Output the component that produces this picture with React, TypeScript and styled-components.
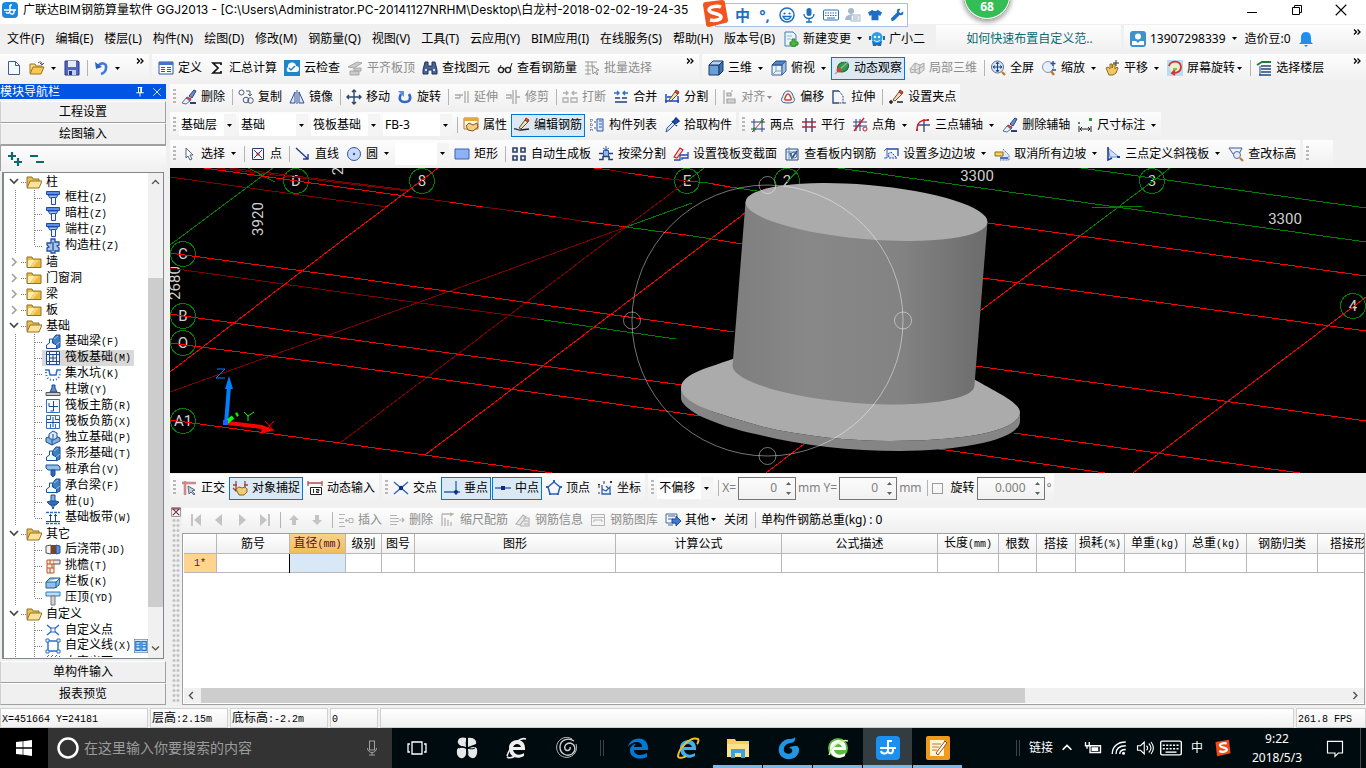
import React, { ReactNode } from 'react';
import styled, { createGlobalStyle, css } from 'styled-components';

const UI_FONT = '"Noto Sans", "Noto Sans CJK SC", sans-serif';

const Global = createGlobalStyle`
  *, *::before, *::after { box-sizing: border-box; }
  body { margin: 0; background: #f0f0f0; font: 12px/16px ${UI_FONT}; color: #000; }
  button, input, select { font: inherit; color: inherit; margin: 0; padding: 0; border: 0; background: none; border-radius: 0; }
  svg { display: block; flex: none; }
`;

/* ---------- icons ---------- */

const N = '#24407e';
const B = '#2f6fc4';
const R = '#c8202c';
const K = '#222';

const pencil = (
  <>
    <path d="M5 11l6-8 3 2-7 7z" fill="#f4e2b0" stroke="#5b4a3a" />
    <path d="M11 3l1-2 3 2-1 2z" fill="#d9503c" stroke="#a03020" />
  </>
);
const brush = (
  <>
    <path d="M8 7l5-6 2 1-4 7z" fill="#6d8fd0" stroke="#27407c" />
    <path d="M6 8l4 2-1 2-4-2z" fill="#e05040" stroke="#a02a20" />
    <path d="M5 9l4 3-4 3-4-1z" fill="#e8eefb" stroke="#55719f" />
    <path d="M9 14h6" stroke="#27407c" strokeWidth="2" />
  </>
);
const column = (
  <>
    <path d="M1.5 1.5h13v3h-13z" fill="#5f90e4" stroke="#1b4aa8" />
    <path d="M3 5h10l-2 3H5z" fill="#a9c6f2" stroke="#1b4aa8" />
    <path d="M6.500 7.500h4v7h-4z" fill="#f0f6ff" stroke="#1b4aa8" />
  </>
);
const beam = (
  <>
    <path d="M7 6l4-5h4v12l-4 2z" fill="#3f7fc4" stroke="#1d4f90" />
    <path d="M1.500 14.500V11l3-2V5h3v4l4 2v3.500z" fill="#f2f8ff" stroke="#1d4f90" />
    <path d="M9 5l4-3M11 11l4-3" stroke="#8fbce8" />
  </>
);
const grid3 = <path d="M4 2v12M8 2v12M1 5h14M1 9h14" stroke={N} />;

const icons: Record<string, ReactNode> = {
  app: (
    <>
      <rect width="16" height="16" rx="4" fill="#1d87e0" />
      <path d="M8 3v6c0 2-3 3-4 1M2 8h12M12 8v2c0 2-2 3-4 1M8 3h2" stroke="#fff" strokeWidth="1.5" />
    </>
  ),
  newFile: <path d="M2.500 1.500h7l4 4v9h-11zM9.500 1.500v4h4" fill="#f4f8ff" stroke="#3f5e8c" />,
  open: (
    <>
      <path d="M1 13V4h5l1 2h6v2" fill="#f6d98a" stroke="#9b7420" />
      <path d="M1 14l3-7h11l-3 7z" fill="#f8c94e" stroke="#9b7420" />
      <path d="M9 3c2-2 4-1 4 1m-2-1l2 2 2-2" stroke="#456" />
    </>
  ),
  save: (
    <>
      <path d="M1 1h13l1 1v13H1z" fill="#5166c4" stroke="#28367e" />
      <path d="M4 1h8v6H4z" fill="#e6ecfb" />
      <path d="M4 10h8v5H4z" fill="#c4cdec" />
      <path d="M5 11h3v4H5z" fill="#28367e" />
    </>
  ),
  undo: (
    <>
      <path d="M5 6c4-5 9-2 8 2 0 3-2 5-5 6" stroke="#3f7ad8" strokeWidth="2.600" />
      <path d="M2 2l1 7 6-2z" fill="#2c5fc0" />
    </>
  ),
  define: (
    <>
      <path d="M1 2h14v12H1z" fill="#fff" stroke="#2858a8" />
      <path d="M1 2h14v3H1z" fill="#3f74c8" />
      <path d="M3 7.500h4M3 9.500h4M3 11.500h4M9 7.500h4M9 9.500h4M9 11.500h4" stroke="#2858a8" />
    </>
  ),
  sigma: <path d="M12 5V3H4l5 5-5 5h8v-2" stroke="#111" strokeWidth="1.7" />,
  cloud: (
    <>
      <rect width="16" height="16" fill="#1f86cc" />
      <path d="M4 12a3 3 0 0 1 0-5 4 4 0 0 1 8-1 3 3 0 0 1 0 6z" fill="#fff" />
      <path d="M5 8l2 2 4-4" stroke="#1f86cc" strokeWidth="1.5" />
    </>
  ),
  slabTop: <path d="M1 7l9-5 5 1-8 5zM7 8h7v3H7zM3 11h9v4H3z" fill="#c9c9c9" stroke="#a8a8a8" />,
  find: (
    <>
      <path d="M3 2h3v4h4V2h3l2 8v4h-5v-4H6v4H1v-4z" fill="#4a6494" stroke="#1d3260" />
      <path d="M3 10h2M11 10h2" stroke="#cfe0ff" strokeWidth="2" />
    </>
  ),
  glasses: (
    <>
      <circle cx="4" cy="10" r="2.6" stroke={K} strokeWidth="1.4" />
      <circle cx="11" cy="10" r="2.6" stroke={K} strokeWidth="1.4" />
      <path d="M6 9h2M2 9l2-4M13 9l2-6" stroke={K} />
    </>
  ),
  batch: (
    <>
      <path d="M1 2h12M1 6h10M1 10h6M1 14h6M4 1v14M8 1v5" stroke="#a0a0a0" />
      <path d="M8 6l1 8 2-2 2 3 1-1-2-3 3-1z" fill="#eee" stroke="#999" />
    </>
  ),
  cube: (
    <>
      <path d="M1 5h10v10H1z" fill="#6c9fd4" stroke="#163a6c" />
      <path d="M1 5l4-4h10l-4 4z" fill="#b7d3f0" stroke="#163a6c" />
      <path d="M11 5l4-4v10l-4 4z" fill="#3f72ac" stroke="#163a6c" />
    </>
  ),
  topView: (
    <>
      <path d="M1 5h10v10H1z" fill="#e9f1fb" stroke="#3a5f94" />
      <path d="M1 5l4-4h10l-4 4z" fill="#4a86cc" stroke="#24487c" />
      <path d="M11 5l4-4v10l-4 4z" fill="#9fc0e8" stroke="#3a5f94" />
      <path d="M5 6v5h6M1 15l4-4" stroke="#7da0cc" />
    </>
  ),
  orbit: (
    <>
      <ellipse cx="9" cy="7" rx="6" ry="4.6" transform="rotate(-35 9 7)" fill="#2f9c48" stroke="#166a2c" />
      <path d="M1 14L14 2" stroke="#9aa" strokeWidth="1.5" />
      <circle cx="5" cy="10" r="2.5" fill="#d8423c" />
      <path d="M4 4c2-3 5-3 7-2" stroke="#bff0c4" />
    </>
  ),
  local3d: <path d="M1 9l5-6 5 2 4-2v7l-5 4-4-2-4 1zM6 3v9M11 5l-1 9M2 9l4 1 9-4" fill="#e0e0e0" stroke="#a8a8a8" />,
  full: (
    <>
      <circle cx="7.5" cy="7" r="6" fill="#d8e8fb" stroke="#5c7090" />
      <path d="M7.5 2.5v9M3 7h9M6 4l1.500-2L9 4M6 10l1.500 2L9 10M5 5.500L3 7l2 1.500M10 5.500L12 7l-2 1.500" stroke="#1c3f86" />
      <path d="M12 12l3 3" stroke="#c07a2c" strokeWidth="2.4" />
    </>
  ),
  zoom: (
    <>
      <circle cx="7" cy="7" r="5.500" fill="#e6f0fb" stroke="#8595ac" />
      <path d="M12 1v5M9.500 3.500h5M11 10h4" stroke="#2b4f9a" strokeWidth="1.400" />
      <path d="M10 11l3 4" stroke="#c07a2c" strokeWidth="2.400" />
    </>
  ),
  pan: (
    <>
      <path d="M2 8l2-1 2 2V4h2v4l1-4h2v5l2-2 1 1-2 5-3 2H5z" fill="#f0c860" stroke="#8c6a28" />
      <path d="M12 0v6M9 3h6" stroke="#333" />
    </>
  ),
  rotateScr: (
    <>
      <rect width="16" height="16" fill="#b7dff2" />
      <circle cx="8" cy="8" r="5" fill="#e9f2c8" />
      <path d="M2 6c1-6 12-6 12 1 0 4-3 6-8 6M8 10l-3 3 3 2" stroke="#d83030" strokeWidth="1.800" />
      <path d="M6 8h4v2H6z" fill="#8cb860" />
    </>
  ),
  floors: (
    <>
      <path d="M1 5l5-3h9" stroke="#1f7a3a" strokeWidth="1.800" />
      <path d="M5 6h10M5 9h10M5 12h10M3 15h12" stroke="#23477f" strokeWidth="1.500" />
      <path d="M4 6v9" stroke="#23477f" />
    </>
  ),
  brush,
  copy: (
    <>
      <circle cx="3.500" cy="3.500" r="2.500" stroke="#4c5c78" />
      <circle cx="8" cy="11" r="2.800" stroke="#4c5c78" />
      <circle cx="12.500" cy="11.500" r="2.800" stroke="#4c5c78" />
      <path d="M8 2h4v4M10 5l2 2 2-2" stroke="#4c5c78" />
    </>
  ),
  mirror: (
    <>
      <path d="M1 14L6 3v11zM15 14L10 3v11z" fill="#dce8fb" stroke="#2d4f94" />
      <path d="M8 1v14" stroke="#2d4f94" />
    </>
  ),
  move: <path d="M8 1v14M1 8h14M6 3l2-2 2 2M6 13l2 2 2-2M3 6L1 8l2 2M13 6l2 2-2 2" stroke="#2d4870" strokeWidth="1.400" />,
  rotate: (
    <>
      <path d="M4 5c-3 6 0 8 4 8s7-3 4-8" stroke="#2f66c8" strokeWidth="2.600" />
      <path d="M1 2h6v6z" fill="#5f8fe0" />
    </>
  ),
  extend: <path d="M1 6h8M1 9h5M6 6v3M11 2v12M14 2v12" stroke="#aaa" strokeWidth="1.300" />,
  trim: <path d="M1 6h5v4M8 1v14M11 1v14M11 8h4M1 9h4" stroke="#aaa" strokeWidth="1.300" />,
  breakIt: <path d="M1 4h5M4 2l2 2-2 2M10 4h5M12 2l-2 2 2 2M1 9h5v4H1zM9 9h6v4H9z" stroke="#b0b0b0" strokeWidth="1.300" />,
  merge: (
    <>
      <path d="M1 4h5M4 2l2 2-2 2M10 4h5M12 2l-2 2 2 2" stroke={B} strokeWidth="1.400" />
      <path d="M2 9h5M9 9h5M2 13h12" stroke={N} strokeWidth="1.600" />
    </>
  ),
  split: (
    <>
      <path d="M2 5v9M14 7v7M1 12h14M3 8h8" stroke="#1c3fd0" strokeWidth="1.400" />
      {pencil}
    </>
  ),
  align: <path d="M3 1v14M6 4h4v3H6zM6 10h8v4H6zM12 2l-2 0" fill="#d0d0d0" stroke="#a4a4a4" strokeWidth="1.200" />,
  offset: (
    <>
      <path d="M8 2c4 0 4 3 6 7 2 4-2 5-6 5s-8-1-6-5c2-4 2-7 6-7z" fill="#e8eef8" stroke="#3b5f94" />
      <path d="M8 5c2 0 2 2 3 4s-1 2-3 2-4 0-3-2 1-4 3-4z" fill="#fff" stroke="#d8402c" strokeWidth="1.500" />
    </>
  ),
  stretch: (
    <>
      <path d="M8 2H2v12h6" stroke="#2c4c80" strokeWidth="1.400" />
      <path d="M8 2l4 5v7H8" stroke="#2c4c80" strokeDasharray="2 1" />
      <path d="M12 14h3" stroke="#2c4c80" />
    </>
  ),
  grip: (
    <>
      {pencil}
      <path d="M1 13h4M9 13h6M3 11v4" stroke={K} strokeWidth="1.500" />
    </>
  ),
  props: (
    <>
      <path d="M1 1h14v11H1z" fill="#fff7e4" stroke="#b07a28" />
      <path d="M1 1h14v3H1z" fill="#e8a53c" />
      <path d="M3 9l3-3 4 2 4-2 1 4-5 4-5-1z" fill="#f4cf80" stroke="#7a5a20" />
    </>
  ),
  editBar: (
    <>
      {pencil}
      <path d="M0 12c3-1 4 2 7 1l8-1" stroke={K} strokeWidth="1.300" />
    </>
  ),
  compList: (
    <>
      <path d="M2 2v12M1 3h3M1 8h3M1 13h3" stroke="#2c4f8c" strokeDasharray="1 1" />
      <path d="M8 2h6v12H8z" fill="#dce8fb" stroke="#2858a8" />
      <path d="M10 4h3M10 7h3M10 10h3" stroke="#2858a8" />
      <path d="M5 5h2M5 11h2" stroke="#555" />
    </>
  ),
  picker: (
    <>
      <path d="M2 15l1-4 6-6 2 2-6 6z" fill="#d6e6fa" stroke="#385a94" />
      <path d="M8 4l5 5M9 5l3-4 3 3-4 3z" fill="#1c58c0" stroke="#153a80" strokeWidth="1.500" />
    </>
  ),
  twoPt: (
    <>
      <path d="M4 2v13M12 1v14M1 5h14M1 12h14" stroke={N} />
      <path d="M2 15L14 2" stroke={R} />
      <circle cx="12" cy="4.500" r="1.500" fill="#2c8a30" />
      <circle cx="4.500" cy="12" r="1.500" fill="#2c8a30" />
    </>
  ),
  parallel: (
    <>
      <path d="M1 5h14M1 10h14" stroke={R} strokeWidth="1.500" />
      <path d="M5 1v14M11 1v14" stroke="#404a80" strokeWidth="1.500" />
    </>
  ),
  ptAngle: (
    <>
      {grid3}
      <path d="M2 14L12 1" stroke={R} strokeWidth="1.400" />
      <circle cx="13" cy="12" r="2" stroke={R} />
    </>
  ),
  threePt: (
    <>
      <path d="M9 2v13M2 8h13" stroke="#404a80" strokeWidth="1.400" />
      <path d="M2 13c0-8 4-10 11-10" stroke={R} strokeWidth="1.500" />
      <path d="M1 12h2v2H1zM12 2h2v2h-2z" fill={R} />
    </>
  ),
  dim: (
    <>
      <path d="M2 9v6M14 9v6M3 12h10M5 10l-2 2 2 2M11 10l2 2-2 2" stroke={K} />
      <path d="M1 5h2v2H1zM12 1h3v3h-3z" fill="#2f9c3c" />
    </>
  ),
  cursor: <path d="M5 2v10l2-2 2 4 2-1-2-4h3z" fill="#fff" stroke="#53647e" />,
  point: (
    <>
      <path d="M2.500 2.500h11v11h-11z" stroke="#283a6c" fill="#f5f8ff" />
      <path d="M4 4l8 8M12 4l-8 8" stroke="#283a6c" />
      <circle cx="8" cy="8" r="1.600" fill={R} />
    </>
  ),
  line: <path d="M1 2l12 11M13 8v5H8" stroke="#22407c" strokeWidth="1.400" />,
  circle: (
    <>
      <circle cx="8" cy="8" r="6.500" fill="#c9dafc" stroke="#3254b0" />
      <circle cx="8" cy="8" r="1.200" fill="#3254b0" />
    </>
  ),
  rect: <path d="M1 3h14v10H1z" fill="#8fb2f4" stroke="#3a62b8" />,
  autoSlab: <path d="M2 2h4v4H2zM10 2h4v4h-4zM2 10h4v4H2zM10 10h4v4h-4z" fill="#e4ecf8" stroke="#2c3f66" strokeWidth="1.600" />,
  byBeam: (
    <>
      <path d="M5.500 4.500h5v6h-5z" fill="#8fb4ee" stroke="#2c58a8" />
      <path d="M8 0v4M5 2l3 2 3-2" stroke="#2c58a8" />
      <path d="M1 7.500h4M11 7.500h4M1 13.500h4v-3h6v3h4" stroke="#23407c" strokeWidth="1.500" />
    </>
  ),
  varSect: (
    <>
      <path d="M1 14h6V9h8v-3M15 6v6H9v2" stroke="#2748b0" strokeWidth="1.300" />
      <path d="M1 11l6-9 3 2-6 8z" fill="#fbe4c4" stroke={R} strokeWidth="1.200" />
    </>
  ),
  viewBar: (
    <>
      <path d="M2 3h12v11H2z" fill="#e7effa" stroke="#2c4c80" />
      <path d="M5 1v13M2 6h12" stroke="#6d8fc0" />
      <path d="M6 7l2 5 5-7" stroke="#2c4c80" strokeWidth="1.600" />
      <circle cx="10" cy="9" r="3" stroke="#56729c" />
    </>
  ),
  slope: (
    <>
      <path d="M4 3h11v7" stroke="#2748b0" strokeWidth="1.300" />
      <path d="M5 8l3-2 6 6H6z" fill="#dfe8f8" stroke="#2748b0" strokeDasharray="2 1" />
      <path d="M1 5l3-3v10H1" stroke="#3b64b0" />
    </>
  ),
  cancelSlope: (
    <>
      <path d="M9 3l6 6v5H6" fill="#dbe6f8" stroke="#5577b0" strokeDasharray="2 1" />
      <path d="M1 6h8v4H1z" fill="#f0d25c" stroke="#8c6f20" />
      <path d="M6 12h8" stroke="#2748b0" strokeWidth="1.500" />
    </>
  ),
  slant: (
    <>
      <path d="M3 2l11 9H5z" fill="#cfe0fa" stroke="#6d8fd0" />
      <path d="M3 1v13l4-2" stroke="#1d3f94" strokeWidth="1.600" />
      <path d="M12 10h3v2h-3z" fill="#1d3f94" />
    </>
  ),
  elev: (
    <>
      <path d="M1 2h13l-3 6H5z" fill="#eef3fb" stroke="#3b5b94" />
      <circle cx="9" cy="9" r="3.500" fill="#e2ecfa" stroke="#566c94" />
      <path d="M12 12l3 3" stroke="#c07a2c" strokeWidth="2.200" />
    </>
  ),
  ortho: (
    <>
      <path d="M1 3h14M4 1v14" stroke="#d08a8a" strokeWidth="2.600" />
      <path d="M7 6l1 8 2-2 3 3 1-1-3-3 3-1z" fill="#c4ccd8" stroke="#5c6c84" />
    </>
  ),
  snap: (
    <>
      <path d="M4 1v9M13 1v9M1 5h4M12 5h4M1 8l3 3 3-3" stroke="#a44040" strokeWidth="1.300" />
      <path d="M4 9l3-2 3 1 3-1 2 2v3l-3 3H7z" fill="#f0cc74" stroke="#84642c" />
    </>
  ),
  dynInput: (
    <>
      <path d="M1 1v5M15 1v5M1 3h14" stroke="#b05050" strokeWidth="1.300" />
      <path d="M3.500 7.500h11v7h-11z" fill="#fff" stroke={K} />
      <path d="M6.500 9v4M9 9.500h3v1.500H9.500v1.500H12" stroke={K} />
    </>
  ),
  cross: (
    <>
      <path d="M1 2l14 12M15 2L1 14" stroke="#2a62b4" strokeWidth="1.300" />
      <circle cx="8" cy="8" r="2.200" fill="#122c7a" />
    </>
  ),
  perp: (
    <>
      <path d="M0 12h16M12 1v14" stroke="#2a62b4" strokeWidth="1.300" />
      <circle cx="12" cy="12" r="2" fill="#122c7a" />
    </>
  ),
  mid: (
    <>
      <path d="M0 8h16" stroke="#2a62b4" strokeWidth="1.400" />
      <path d="M6 6h4v4H6z" fill="#122c7a" />
    </>
  ),
  vertex: (
    <>
      <path d="M8 2l6 5-2 7H4L2 7z" stroke="#2a62b4" strokeWidth="1.500" />
      <path d="M7 0h2v3H7zM0 6h3v2H0zM13 6h3v2h-3zM3 13h2v2H3zM11 13h2v2h-2z" fill="#2a62b4" />
    </>
  ),
  coord: (
    <>
      <path d="M5 5v9h9M5 9l4 2 4-4v7M9 6l2 2" stroke="#2a62b4" strokeWidth="1.300" />
      <path d="M1 4l1 1 1-1M2 5v3M13 1l2 2M15 1l-2 2M7 1v3M1 13h2" stroke="#333" />
    </>
  ),
  first: <path d="M3 2h2v12H3zM13 2v12L6 8z" fill="#c4c4c4" />,
  prev: <path d="M11 2v12L4 8z" fill="#c4c4c4" />,
  next: <path d="M5 2v12l7-6z" fill="#c4c4c4" />,
  last: <path d="M11 2h2v12h-2zM3 2v12l7-6z" fill="#c4c4c4" />,
  up: <path d="M8 3l5 5h-3v5H6V8H3z" fill="#c4c4c4" />,
  down: <path d="M8 13l5-5h-3V3H6v5H3z" fill="#c4c4c4" />,
  insert: <path d="M1 2.500h6M1 6.500h5M1 10.500h5M1 14.500h6M7 8.500h4M9 7l-2 1.500L9 10M11 6.500h4v4h-4z" stroke="#b4b4b4" />,
  remove: <path d="M1 3.500h7M1 6.500h9M1 9.500h9M1 12.500h7M10 8h5M13 6l2 2-2 2" stroke="#b4b4b4" strokeWidth="1.200" />,
  scale: <path d="M2 2v12M2 2h10M10 1l3 1-3 2M5 6v8M8 8v6M11 10v4" stroke="#b4b4b4" strokeWidth="1.300" />,
  barInfo: <path d="M1 12l7-9 3 2-6 8zM8 6h6v8H5M9 9h4M9 12h4" fill="#e8e8e8" stroke="#b4b4b4" strokeWidth="1.200" />,
  barLib: <path d="M1.500 2.500h13v11h-13zM1 5.500h14M4 10V8h8v2" fill="#f4f4f4" stroke="#b4b4b4" />,
  other: (
    <>
      <path d="M1 2h11v9H1zM3 4h7M3 7h5" fill="#f2f6fd" stroke="#44689c" />
      <path d="M3 13h5" stroke="#44689c" />
      <path d="M7 7h4V4l5 5-5 5v-3H7z" fill="#3f7ad8" stroke="#1d4794" />
    </>
  ),
  change: (
    <>
      <path d="M2 1h8l3 3v11H2z" fill="#eaf4fc" stroke="#3f7fb0" />
      <path d="M4 5h5M4 8h4" stroke="#8fb8d8" />
      <path d="M9 8h3v3h3v3h-3v2H9v-2H7v-3h2z" fill="#4cb83c" stroke="#2c8a28" />
    </>
  ),
  robot: (
    <>
      <path d="M3 10h10l-1 5H9l-1-1-1 1H4z" fill="#1d6cb4" />
      <circle cx="8" cy="6.500" r="5.500" fill="#2d9fe8" />
      <path d="M0 5h2v4H0zM14 5h2v4h-2z" fill="#1d6cb4" />
      <circle cx="6" cy="6" r="1.200" fill="#fff" />
      <circle cx="10" cy="6" r="1.200" fill="#fff" />
      <path d="M5 9c2 2 4 2 6 0" stroke="#fff" />
    </>
  ),
  user: (
    <>
      <rect width="16" height="16" rx="3" fill="#3f93c8" />
      <circle cx="8" cy="5.500" r="3" fill="#fff" />
      <path d="M2 14v-4h4l2 2 2-2h4v4z" fill="#fff" />
    </>
  ),
  bell: <path d="M8 1c4 0 5 3 5 6v4l2 2H1l2-2V7c0-3 1-6 5-6zM6 14h4l-2 2z" fill="#1e8ff0" />,
  folderOpen: (
    <>
      <path d="M1 13V3h5l1 2h6v3" fill="#e7bf52" stroke="#94702a" />
      <path d="M1 14l3-7h12l-3 7z" fill="#fbe39a" stroke="#94702a" />
    </>
  ),
  folder: (
    <>
      <path d="M1 13.500V3h5l1 2h8v8.500z" fill="#eeb93c" stroke="#94702a" />
      <path d="M2 6h7l-5 7H2z" fill="#fdeeb0" />
      <path d="M9 6h4l-6 7H4z" fill="#f6d474" />
    </>
  ),
  column,
  consCol: <path d="M6 1h4v3h4v3l-2 1 2 2v3h-4v2H6v-2H2v-3l2-1-2-2V5h4zM8 4v9" fill="#a9c6ee" stroke="#23509c" strokeWidth="1.300" />,
  beam,
  raft: <path d="M1.500 1.500h13v13h-13zM4.500 1v14M11.500 1v14M1 4.500h14M1 11.500h14M8 4.500v7M4.500 8h7" fill="#eef5ff" stroke="#1b4a94" />,
  pit: (
    <>
      <path d="M0 4h4l1 5h6l1-5h4" stroke={B} strokeWidth="1.500" />
      <path d="M1 6c0 6 3 8 7 8s7-2 7-8" stroke={B} strokeDasharray="1 2" strokeWidth="2" />
    </>
  ),
  pier: (
    <>
      <path d="M7 3h3v3l2 4H5l2-4z" fill="#5c8fd8" stroke="#1d4794" />
      <path d="M1 10.500h14v3H1z" fill="#c8c8c8" stroke="#555" />
    </>
  ),
  mainBar: (
    <>
      <path d="M1.500 1.500h13v13h-13z" fill="#f3f8ff" stroke={B} />
      <path d="M4 5v3.500h9M8.500 3v10h-3" stroke="#1b4a94" />
    </>
  ),
  negBar: (
    <>
      <path d="M1.500 1.500h13v13h-13zM5.500 2v4M10.500 2v4M5.500 10v4M10.500 10v4" fill="#f3f8ff" stroke={B} />
      <path d="M2 8.500h12M8 3v10M2 5.500h3M11 5.500h3" stroke="#1b4a94" />
    </>
  ),
  isoBase: (
    <>
      <path d="M1 8l7-3 7 3v3l-8 4-6-3z" fill="#7fb0e0" stroke="#1d4f90" />
      <path d="M4 4l4-3 4 2v5l-4 2-4-2z" fill="#d8e9fa" stroke="#1d4f90" />
      <path d="M7 10v5M8 4v5" stroke="#1d4f90" />
    </>
  ),
  pileCap: (
    <>
      <path d="M1 3h12l2 2v3H3L1 6z" fill="#8fc0ec" stroke="#1d4f90" />
      <path d="M6 8h4v5l-2 2-2-2z" fill="#2f6fb8" stroke="#1d4f90" />
    </>
  ),
  pile: (
    <>
      <path d="M6 1h4v9l-2 5-2-5z" fill="#7fb0e0" stroke="#1d4f90" />
      <path d="M2 8l3-1h6l3 1-3 3H5z" fill="#2f6fb8" stroke="#1d4f90" />
    </>
  ),
  strip: (
    <>
      <path d="M1 2.500h14M1 13.500h14" stroke={B} strokeWidth="1.400" strokeDasharray="3 1" />
      <path d="M5.500 4v8M10.500 4v8M1 11.500h14M4 5.500h3M9 5.500h3" stroke="#1b4a94" />
    </>
  ),
  pourBelt: (
    <>
      <path d="M1 4l5-1v9l-5-1z" fill="#f2f2f2" stroke="#555" />
      <path d="M6 3h5v9H6z" fill="#7a4420" />
      <path d="M11 3l4 1v7l-4 1z" fill="#5c8fd8" stroke="#23509c" />
    </>
  ),
  eaves: (
    <>
      <path d="M2 2h7v13H2zM2 6h7M2 10h7M5 2v4M7 6v4M5 10v5" fill="#fbe9dc" stroke="#b4582c" />
      <path d="M9 2h6v4H9" stroke="#555" fill="#e6e6e6" />
    </>
  ),
  plate: <path d="M1 8l4-4h10l-1 7-4 3H1zM1 8h10l4-4M11 8v6" fill="#8fc0ec" stroke="#1d5f90" />,
  coping: (
    <>
      <path d="M1 2h14v4H1z" fill="#bcdcf6" stroke="#2f7fb8" />
      <path d="M6 6h4v9H6z" fill="#d4d4d4" stroke="#777" />
    </>
  ),
  customPt: (
    <>
      <path d="M2 3l12 10M14 3L2 13" stroke={B} strokeWidth="1.500" />
      <path d="M6 6h4v4H6z" fill="#fff" stroke={B} />
    </>
  ),
  customLine: (
    <>
      <path d="M3 3h10v10H3z" stroke={B} strokeWidth="1.400" />
      <path d="M1 1h3v3H1zM12 1h3v3h-3zM1 12h3v3H1zM12 12h3v3h-3z" fill="#fff" stroke={B} />
    </>
  ),
  customFace: <path d="M1 4l3-3M5 4l3-3M9 4l3-3M12 5l3-3M1 8l6-6M1 12L12 1M3 15L15 3M8 15l7-7" stroke={B} />,
  mini: (
    <>
      <path d="M0 0h16v16H0z" fill="#cfe6fb" stroke="#555" />
      <path d="M2 3h5v10H2zM9 3h5v10H9zM2 6h5M2 9h5M9 6h5M9 9h5" stroke="#1676d2" strokeWidth="1.300" />
    </>
  ),
  pin: <path d="M5 2h6M6 2v7M10 2v7M9 2v7M3 9h10M8 9v5" stroke="#fff" strokeWidth="1.300" />,
  close: <path d="M2 2l12 12M14 2L2 14" stroke="currentColor" strokeWidth="1.300" />,
  expandAll: <path d="M1 5h8M5 1v8M7 11h8M11 7v8" stroke="#0a6a6a" strokeWidth="2.200" />,
  collapseAll: <path d="M1 5h8M7 11h8" stroke="#0a6a6a" strokeWidth="2.200" />,
  chevDown: <path d="M3 5l5 5 5-5" stroke="currentColor" strokeWidth="2" />,
  chevUp: <path d="M3 10l5-5 5 5" stroke="currentColor" strokeWidth="2" />,
  chevRight: <path d="M5 3l5 5-5 5" stroke="currentColor" strokeWidth="2" />,
  chevLeft: <path d="M10 3L5 8l5 5" stroke="currentColor" strokeWidth="2" />,
  minimize: <path d="M3 10.500h10" stroke="#000" />,
  restore: <path d="M3.500 5.500h7v7h-7zM5.500 5V3.500h7v7H11" stroke="#000" />,
  smile: (
    <>
      <circle cx="8" cy="8" r="7" stroke="#1e6fc4" strokeWidth="1.500" />
      <circle cx="5.500" cy="6.500" r="1.100" fill="#1e6fc4" />
      <circle cx="10.500" cy="6.500" r="1.100" fill="#1e6fc4" />
      <path d="M4 9.500c2 4 6 4 8 0z" stroke="#1e6fc4" strokeWidth="1.300" />
    </>
  ),
  mic: (
    <>
      <rect x="5.500" y="1" width="5" height="8" rx="2.500" fill="currentColor" />
      <path d="M3 7c0 6 10 6 10 0M8 12v3M5 15h6" stroke="currentColor" strokeWidth="1.400" />
    </>
  ),
  micLine: (
    <>
      <rect x="5.500" y="1" width="5" height="9" stroke="#a0a0a0" />
      <path d="M3.500 8c0 6 9 6 9 0M8 12v3M5 15h6" stroke="#a0a0a0" />
    </>
  ),
  keyboard: (
    <>
      <rect x=".5" y="3" width="15" height="10" rx="1" stroke="currentColor" />
      <path d="M2 6h12M2 8.500h12" stroke="currentColor" strokeDasharray="1.500 1" />
      <path d="M4 11h8" stroke="currentColor" />
    </>
  ),
  person: (
    <>
      <circle cx="6" cy="4" r="3" fill="#a8b8cc" />
      <path d="M0 13c0-7 12-7 12-2v2z" fill="#a8b8cc" />
      <rect x="6" y="8" width="9" height="6" fill="#eef2f8" stroke="#a8b8cc" />
      <path d="M8 10h5M8 12h5" stroke="#a8b8cc" />
    </>
  ),
  shirt: <path d="M5 2c1 2 5 2 6 0l5 3-2 4-2-1v6H4V8L2 9 0 5z" fill="#1e6fc4" />,
  wrench: <path d="M15 4l-3 2-2-2 2-3c-3-1-5 1-4 4L1 12l1 3 3-1 6-6c3 1 5-1 4-4z" fill="#1e6fc4" />,
  grayClose: (
    <>
      <path d="M1 1h14v14H1z" fill="#fff" stroke="#555" />
      <path d="M3 3l10 10M13 3L3 13M1 3h14" stroke="#7a3040" strokeWidth="2" />
    </>
  ),
};

const Icon = ({ n, s = 16 }: { n: string; s?: number }) => (
  <svg width={s} height={s} viewBox="0 0 16 16" fill="none" aria-hidden="true">
    {icons[n]}
  </svg>
);

const Caret = ({ c = '#000' }: { c?: string }) => (
  <svg width="5" height="3" viewBox="0 0 5 3" aria-hidden="true">
    <path d="M0 0h5L2.500 3z" fill={c} />
  </svg>
);

/* ---------- shared parts ---------- */

const MonoRun = styled.span`
  font-family: "Liberation Mono", monospace;
  font-size: 10px;
`;

/* Full-width characters at 12px with half-width (6px) ASCII between them. */
const Fixed = ({ children }: { children: string }) => (
  <>
    {children.split(/([\x20-\x7e]+)/).map((t, i) => (i % 2 ? <MonoRun key={i}>{t}</MonoRun> : t))}
  </>
);

const Bar = styled.div<{ $w?: number; $grow?: boolean }>`
  display: flex;
  align-items: center;
  gap: 1px;
  height: 100%;
  padding: 0 1px 0 3px;
  background: linear-gradient(#fdfdfd, #f0f0f0);
  flex: ${(p) => (p.$grow ? '1 1 0' : p.$w ? `0 0 ${p.$w}px` : 'none')};
  white-space: nowrap;
`;

const BarRow = styled.div<{ $h: number }>`
  display: flex;
  gap: 3px;
  height: ${(p) => p.$h}px;
  padding: 1px 0;
  overflow: hidden;
  flex: none;
`;

const Grip = styled.span`
  width: 3px;
  height: 16px;
  margin-right: 1px;
  flex: none;
  background: repeating-linear-gradient(#b8b8b8 0 2px, transparent 2px 4px);
`;

const Sep = styled.span`
  width: 1px;
  height: 16px;
  margin: 0 1px 0 3px;
  background: #b4b4b4;
  flex: none;
`;

const Tool = styled.button<{ $on?: boolean }>`
  display: flex;
  align-items: center;
  gap: 4px;
  height: 23px;
  padding: 0 2px;
  border: 1px solid transparent;
  white-space: nowrap;
  flex: none;
  &:disabled { color: #8c8c8c; }
  ${(p) =>
    p.$on &&
    css`
      border-color: #0078d7;
      background: #dbe9f5;
    `}
`;

const CaretBox = styled.span<{ $tight?: boolean }>`
  margin: ${(p) => (p.$tight ? '0 1px 0 -2px' : '0 1px 0 2px')};
`;

const MoreButton = styled.button`
  align-self: flex-start;
  margin-left: auto;
  padding: 4px 4px 0;
`;

const More = () => (
  <MoreButton aria-label="更多">
    <svg width="8" height="6" viewBox="0 0 8 6" fill="none" stroke="#000" strokeWidth="1.300" aria-hidden="true">
      <path d="M1 .5L3.500 3 1 5.500M4.500.5L7 3 4.500 5.500" />
    </svg>
  </MoreButton>
);

const ComboBox = styled.span<{ $w: number }>`
  position: relative;
  display: flex;
  align-items: center;
  width: ${(p) => p.$w}px;
  height: 22px;
  margin: 0 1px;
  background: linear-gradient(90deg, #fff calc(100% - 12px), #f4f4f4 calc(100% - 12px));
  flex: none;
  select {
    appearance: none;
    width: 100%;
    height: 100%;
    padding: 0 12px 0 2px;
  }
  svg { position: absolute; right: 4px; pointer-events: none; }
`;

const Combo = ({ w, label, v }: { w: number; label: string; v: string }) => (
  <ComboBox $w={w}>
    <select aria-label={label} defaultValue={v}>
      <option>{v}</option>
    </select>
    <Caret />
  </ComboBox>
);

type Item = { i?: string; t?: string; a?: boolean | 'tight'; on?: boolean; off?: boolean } | '|' | ':';

const Tools = ({ items }: { items: Item[] }) => (
  <>
    {items.map((it, k) =>
      it === '|' ? (
        <Sep key={k} />
      ) : it === ':' ? (
        <Grip key={k} />
      ) : (
        <Tool key={k} $on={it.on} disabled={it.off} aria-label={it.t ? undefined : it.i}>
          {it.i && <Icon n={it.i} />}
          {it.t}
          {it.a && (
            <CaretBox $tight={it.a === 'tight'}>
              <Caret c={it.off ? '#8c8c8c' : '#000'} />
            </CaretBox>
          )}
        </Tool>
      ),
    )}
  </>
);

/* ---------- window frame ---------- */

const Window = styled.div`
  display: flex;
  flex-direction: column;
  min-height: 100vh;
  overflow: hidden;
  position: relative;
`;

const TitleBar = styled.header`
  display: flex;
  align-items: center;
  height: 24px;
  padding: 0 18px 4px 2px;
  gap: 5px;
  background: #fff;
  white-space: nowrap;
`;

const TitleText = styled.h1`
  margin: 0;
  flex: 1;
  font-family: Inter, "Noto Sans CJK SC", sans-serif;
  font-size: 12px;
  font-weight: 400;
`;

const WinButtons = styled.div`
  display: flex;
  gap: 29px;
`;

const MenuNav = styled.nav`
  display: flex;
  align-items: center;
  flex: 0 0 933px;
  padding-left: 1px;
  white-space: nowrap;
  > button { padding: 0 5px 0 6px; }
`;

const MenuTool = styled(Tool)`
  && { padding: 0 2px; }
`;

const HelpLink = styled.a`
  flex: 1;
  text-align: center;
  color: #0a6b72;
  text-decoration: none;
`;

const ImeBar = styled.div`
  position: absolute;
  top: 3px;
  left: 715px;
  display: flex;
  align-items: center;
  gap: 5px;
  width: 193px;
  height: 24px;
  padding-left: 18px;
  border: 1px solid #a9c0dc;
  background: #fff;
  color: #1e6fc4;
  button { display: flex; justify-content: center; width: 17px; font-size: 15px; font-weight: 700; }
`;

const ImeLogo = styled.svg`
  position: absolute;
  top: 0;
  left: 701px;
`;

const Score = styled.div`
  position: absolute;
  top: -28px;
  left: 963px;
  display: flex;
  align-items: flex-end;
  justify-content: center;
  width: 48px;
  height: 48px;
  padding-bottom: 3px;
  border: 2px solid #fff;
  outline: 1px solid #9aa49a;
  outline-offset: -1px;
  border-radius: 50%;
  background: #35bd55;
  box-shadow: 0 2px 5px #0006;
  color: #fff;
  font-weight: 700;
`;

/* ---------- sidebar ---------- */

const Body = styled.div`
  display: flex;
  gap: 3px;
  flex: 1;
  min-height: 0;
`;

const Sidebar = styled.aside`
  display: flex;
  flex-direction: column;
  width: 167px;
  padding: 1px 1px 2px 0;
  flex: none;
`;

const SideHead = styled.div`
  display: flex;
  align-items: center;
  gap: 6px;
  height: 15px;
  margin-bottom: 2px;
  padding-right: 4px;
  background: #0054e3;
  color: #fff;
  font-size: 12px;
  line-height: 14px;
  span { flex: 1; }
`;

const SideButton = styled.button`
  height: 22px;
  border: 1px solid #a0a0a0;
  border-top-color: #fff;
  border-left-color: #d0d0d0;
  background: #f0f0f0;
  flex: none;
`;

const SidePalette = styled.div`
  display: flex;
  align-items: center;
  gap: 6px;
  height: 26px;
  padding-left: 6px;
  border: 1px solid #a0a0a0;
  border-width: 1px 0 0 1px;
  background: linear-gradient(#fdfdfd, #f0f0f0);
  flex: none;
`;

const TreeBox = styled.div`
  display: flex;
  flex: 1 1 0;
  min-height: 0;
  height: 486px;
  margin: 1px 2px 2px;
  border: 2px solid #828790;
  border-width: 1px 1px 1px 2px;
  background: #fff;
  overflow: hidden;
`;

const Tree = styled.ul`
  flex: 1;
  min-width: 0;
  height: 484px;
  margin: 0;
  padding: 1px 0 0;
  list-style: none;
  overflow: hidden;
`;

const TreeRow = styled.li`
  display: flex;
  align-items: center;
  height: 16px;
  white-space: nowrap;
`;

const TreeLabel = styled.span<{ $sel?: boolean; $folder?: boolean }>`
  display: flex;
  align-items: center;
  gap: 4px;
  height: 16px;
  padding: 0 ${(p) => (p.$folder ? 0 : 3)}px;
  background: ${(p) => (p.$sel ? '#d9d9d9' : 'none')};
`;

const Run = styled.span`
  line-height: 16px;
`;

const VTrack = styled.div`
  display: flex;
  flex-direction: column;
  align-items: center;
  justify-content: space-between;
  width: 15px;
  padding: 4px 0;
  background: #f0f0f0;
  color: #505050;
  flex: none;
`;

const VThumb = styled.div`
  align-self: stretch;
  height: 329px;
  margin-top: 84px;
  margin-bottom: 30px;
  background: #cdcdcd;
`;

type Group = { t: string; kids?: [string, string][] };
const groups: Group[] = [
  { t: '柱', kids: [['column', '框柱(Z)'], ['column', '暗柱(Z)'], ['column', '端柱(Z)'], ['consCol', '构造柱(Z)']] },
  { t: '墙' },
  { t: '门窗洞' },
  { t: '梁' },
  { t: '板' },
  {
    t: '基础',
    kids: [
      ['beam', '基础梁(F)'], ['raft', '筏板基础(M)'], ['pit', '集水坑(K)'], ['pier', '柱墩(Y)'],
      ['mainBar', '筏板主筋(R)'], ['negBar', '筏板负筋(X)'], ['isoBase', '独立基础(P)'], ['beam', '条形基础(T)'],
      ['pileCap', '桩承台(V)'], ['beam', '承台梁(F)'], ['pile', '桩(U)'], ['strip', '基础板带(W)'],
    ],
  },
  { t: '其它', kids: [['pourBelt', '后浇带(JD)'], ['eaves', '挑檐(T)'], ['plate', '栏板(K)'], ['coping', '压顶(YD)']] },
  { t: '自定义', kids: [['customPt', '自定义点'], ['customLine', '自定义线(X)'], ['customFace', '自定义面']] },
];

const Guide = ({ last }: { last: boolean }) => (
  <svg width="38" height="16" viewBox="0 0 38 16" fill="none" stroke="#808080" strokeDasharray="1 1" shapeRendering="crispEdges" aria-hidden="true">
    <path d={`M11.500 0v16M30.500 0v${last ? 8 : 16}M31 8.500h8`} />
  </svg>
);

const FolderGuide = ({ open }: { open: boolean }) => (
  <svg width="22" height="16" viewBox="0 0 22 16" fill="none" aria-hidden="true">
    <path d={open ? 'M6 5l4 4 4-4' : 'M8 4l4 4-4 4'} stroke={open ? '#404040' : '#a0a0a0'} strokeWidth="1.600" />
    <path d="M17 8.500h5" stroke="#808080" strokeDasharray="1 1" />
  </svg>
);

const SideTree = () => (
  <TreeBox>
    <Tree>
      {groups.map((g) => (
        <React.Fragment key={g.t}>
          <TreeRow>
            <FolderGuide open={!!g.kids} />
            <TreeLabel $folder>
              <Icon n={g.kids ? 'folderOpen' : 'folder'} />
              {g.t}
            </TreeLabel>
          </TreeRow>
          {g.kids?.map(([ic, t], k) => (
            <TreeRow key={t}>
              <Guide last={k === g.kids!.length - 1 && g.t !== '自定义'} />
              <TreeLabel $sel={ic === 'raft'}>
                <Icon n={ic} />
                <Run>
                  <Fixed>{t}</Fixed>
                </Run>
              </TreeLabel>
              {ic === 'customLine' && <Icon n="mini" s={14} />}
            </TreeRow>
          ))}
        </React.Fragment>
      ))}
    </Tree>
    <VTrack>
      <Icon n="chevUp" s={11} />
      <VThumb />
      <Icon n="chevDown" s={11} />
    </VTrack>
  </TreeBox>
);

/* ---------- 3D view ---------- */

const Main = styled.main`
  display: flex;
  flex-direction: column;
  flex: 1;
  min-width: 0;
  padding-bottom: 2px;
`;

const Viewport = styled.div`
  height: 305px;
  background: #000;
  overflow: hidden;
  flex: none;
  svg { width: 100%; height: 305px; }
`;

const bright = [
  'M204 168L340 187L412 197', 'M449 202L483 207M514 211L556 217M581 221L626 227', 'M438 168L340 242L170 372',
  'M170 253L340 276L734 332', 'M170 314L340 338L682 385', 'M170 343L340 365L701 416', 'M425 455L745 213',
  'M170 420L340 443L552 473', 'M594 168L610 170M628 173L662 178M708 183L730 187', 'M655 231L686 235M712 239L742 244',
  'M988 223L1366 276', 'M983 278L1366 331', 'M976 366L1366 421', 'M1014 433L1300 473', 'M939 449L1105 473',
  'M1366 297L1133 473', 'M804 444L766 473', 'M1080 236L980 311',
];
const dark = [
  'M217 168L408 191', 'M230 168L408 190', 'M170 177L387 207', 'M170 268L340 292L537 319', 'M170 392L340 331L626 227',
  'M340 443L626 227L687 181', 'M412 197L449 202M483 207L514 211M556 217L581 221', 'M610 170L628 173M662 178L687 181',
];
const green = [
  'M273 168L170 245', 'M248 168L275 182', 'M537 319L676 339', 'M626 227L692 203', 'M626 227L655 231M686 235L712 239',
  'M687 181L704 168', 'M687 181L708 183M730 187L757 191', 'M838 168L1366 242', 'M1081 168L1366 208', 'M1170 168L1080 236',
  'M1092 208L1142 206', 'M800 168L787 182',
];
const bubbles: [number, number, string][] = [
  [296, 181, 'D'], [422, 181, '8'], [687, 181, 'E'], [183, 254, 'C'], [183, 316, 'B'], [183, 343, 'O'],
  [183, 421, 'A1'], [787, 181, '2'], [1152, 181, '3'], [1353, 306, '4'],
];
const dims: [number, number, string, boolean][] = [
  [977, 176, '3300', false], [1285, 219, '3300', false], [258, 219, '3920', true], [175, 283, '2680', true], [338, 171, '2', true],
];

const Scene = () => (
  <Viewport>
    <svg viewBox="170 168 1196 305" preserveAspectRatio="xMinYMin slice" fill="none" role="img" aria-label="3D 视图">
      <defs>
        <linearGradient id="crown" x1="0" x2="1" y1="0" y2="0">
          <stop offset="0" stopColor="#7e7e7e" />
          <stop offset=".3" stopColor="#888" />
          <stop offset=".65" stopColor="#838383" />
          <stop offset="1" stopColor="#6c6c6c" />
        </linearGradient>
      </defs>
      {bubbles.map(([x, y]) => (
        <circle key={`${x}-${y}`} cx={x} cy={y} r="12.500" stroke="#008000" shapeRendering="crispEdges" />
      ))}
      <g fontFamily="Roboto, sans-serif" fontSize="15" fill="#d0d0d0" textAnchor="middle">
        {bubbles.map(([x, y, t]) => (
          <text key={`${x}-${y}`} x={x} y={y + 5}>
            {t}
          </text>
        ))}
        {dims.map(([x, y, t, up]) => (
          <text key={`${x}-${y}`} x={x} y={y + 5} transform={up ? `rotate(-90 ${x} ${y})` : undefined}>
            {t}
          </text>
        ))}
      </g>
      <g shapeRendering="crispEdges">
        <path d={dark.join('')} stroke="#800000" />
        <path d={green.join('')} stroke="#008000" />
        <path d={bright.join('')} stroke="#f00" />
      </g>
      <path d="M681 385C681 398 705 409 717 413C735 419 748 422 760 426C800 436 850 441 890 441C960 441 1020 432 1020 412V421C1020 440 960 451 900 451C850 451 800 445 760 435C735 430 715 423 698 415C688 409 681 403 681 398z" fill="#858585" />
      <path d="M735 358C712 367 681 373 681 388C681 400 705 409 717 413C735 419 748 422 760 426C800 436 850 441 890 441C960 441 1020 432 1020 412C1020 402 990 389 972 378z" fill="#ababab" />
      <path d="M745.500 202L732.500 366A121.400 27.200 4.880 0 0 974.500 385L987.500 222z" fill="url(#crown)" />
      <ellipse cx="866.500" cy="212" rx="121.400" ry="27.200" transform="rotate(4.880 866.500 212)" fill="#ababab" />
      <g stroke="#fff" strokeOpacity=".45">
        <circle cx="767.500" cy="320.500" r="135.500" />
        <circle cx="632" cy="320.500" r="8.500" />
        <circle cx="903" cy="320.500" r="8.500" />
        <circle cx="767.500" cy="185" r="8.500" />
        <circle cx="767.500" cy="456" r="8.500" />
      </g>
      <path d="M226 424l3-38" stroke="#0080ff" strokeWidth="4" />
      <path d="M229 376l4 13h-8z" fill="#0080ff" />
      <path d="M217 369h8l-9 9h9" stroke="#0080ff" />
      <path d="M228 423l34 4" stroke="#f00" strokeWidth="4" />
      <path d="M274 430l-13 4 1-9z" fill="#f00" />
      <path d="M265 421l9 10M274 421l-8 9" stroke="#f00" />
      <path d="M226 423l7-6M236 415l2-1" stroke="#0f0" strokeWidth="4" />
      <path d="M244 412l4 4 6-4M248 416v5" stroke="#0f0" />
      <path d="M223 420h5v5h-5z" fill="#2060ff" />
    </svg>
  </Viewport>
);

/* ---------- snap bar ---------- */

const FieldLabel = styled.label<{ $dim?: boolean }>`
  padding: 0 1px;
  color: ${(p) => (p.$dim ? '#808080' : '#000')};
`;

const SpinBox = styled.span<{ $w: number }>`
  display: flex;
  width: ${(p) => p.$w}px;
  height: 23px;
  border: 1px solid #767676;
  color: #808080;
  flex: none;
  input { flex: 1; width: 0; text-align: right; font-size: 12px; color: inherit; background: none; }
`;

const SpinArrows = styled.span`
  display: flex;
  flex-direction: column;
  justify-content: space-between;
  width: 18px;
  padding: 4px 4px 4px 9px;
  svg:first-child { transform: rotate(180deg); }
`;

const Check = styled.input`
  appearance: none;
  width: 11px;
  height: 11px;
  && { border: 1px solid #9a9a9a; margin: 0 6px 0 2px; }
`;

const Spin = ({ id, w, v }: { id: string; w: number; v: string }) => (
  <SpinBox $w={w}>
    <input id={id} defaultValue={v} />
    <SpinArrows>
      <Caret c="#606060" />
      <Caret c="#606060" />
    </SpinArrows>
  </SpinBox>
);

/* ---------- rebar table ---------- */

const Dock = styled.section`
  display: flex;
  flex: 1;
  min-height: 0;
  padding-top: 4px;
`;

const DockStrip = styled.div`
  width: 12px;
  padding: 0 1px;
  flex: none;
  &::after {
    content: '';
    display: block;
    height: calc(100% - 12px);
    margin: 1px 1px 0;
    background: radial-gradient(circle, #c4c4c4 1px, transparent 2px) 0 0 / 4px 5px;
  }
`;

const DockMain = styled.div`
  display: flex;
  flex-direction: column;
  flex: 1;
  min-width: 0;
`;

const Grid = styled.div`
  display: flex;
  flex-direction: column;
  flex: 1;
  margin: 1px 1px 0 0;
  padding: 0 0 1px 1px;
  border: 1px solid #a0a0a0;
  background: #fff;
  overflow: hidden;
`;

const GridScroll = styled.div`
  flex: 1;
  overflow: hidden;
`;

const Table = styled.table`
  table-layout: fixed;
  width: 1207px;
  border-collapse: separate;
  border-spacing: 0;
  th, td {
    height: 19px;
    padding: 0;
    border-right: 1px solid #b8b8b8;
    border-bottom: 1px solid #b8b8b8;
    font-weight: 400;
    text-align: center;
    white-space: nowrap;
  }
  thead th { height: 20px; background: linear-gradient(#fff, #f0f0f0); }
`;

const HotHead = styled.th`
  && { background: linear-gradient(#f7d28c, #f0bd5c); color: #5c0a3c; }
`;
const RowHead = styled.th`
  && { background: #ffd48c; color: #5c0a5c; }
`;
const EditCell = styled.td`
  && { background: #d8e8f7; box-shadow: -1px 0 0 #000; }
`;

const HScroll = styled.div`
  display: flex;
  align-items: center;
  height: 15px;
  padding: 0 3px 0 2px;
  background: #f0f0f0;
  color: #505050;
  gap: 4px;
`;
const HTrack = styled.div`
  display: flex;
  flex: 1;
  height: 15px;
`;
const HThumb = styled.div`
  width: 72%;
  background: #cdcdcd;
`;

const columns: [string, number][] = [
  ['', 33], ['筋号', 73], ['直径(mm)', 56], ['级别', 36], ['图号', 33], ['图形', 201], ['计算公式', 166], ['公式描述', 156],
  ['长度(mm)', 61], ['根数', 38], ['搭接', 39], ['损耗(%)', 49], ['单重(kg)', 61], ['总重(kg)', 61], ['钢筋归类', 71], ['搭接形式', 73],
];

/* ---------- status and task bars ---------- */

const Status = styled.footer`
  display: flex;
  gap: 2px;
  height: 21px;
  padding-top: 1px;
  white-space: nowrap;
`;

const StatusCell = styled.span<{ $w?: number }>`
  flex: ${(p) => (p.$w ? `0 0 ${p.$w}px` : '1')};
  padding: 1px;
  border: 1px solid #d0d0d0;
  background: linear-gradient(#fff, #f0f0f0);
`;

const TaskBar = styled.div`
  display: flex;
  height: 40px;
  background: #000b0f;
  color: #fff;
  white-space: nowrap;
`;

const Start = styled.button`
  display: flex;
  align-items: center;
  justify-content: center;
  width: 48px;
  background: #000;
`;

const Search = styled.label`
  display: flex;
  align-items: center;
  gap: 4px;
  width: 344px;
  padding: 0 12px 0 8px;
  background: #333;
  input { flex: 1; width: 0; font-size: 14px; color: #fff; }
  input::placeholder { color: #9c9c9c; opacity: 1; font-size: 14px; }
`;

const Task = styled.button<{ $run?: boolean; $active?: boolean }>`
  display: flex;
  align-items: center;
  justify-content: center;
  width: 49px;
  padding-top: 3px;
  border-bottom: 3px solid ${(p) => (p.$run ? '#76b9ed' : 'transparent')};
  background: ${(p) => (p.$active ? '#333d41' : 'none')};
`;

const TaskList = styled.div`
  display: flex;
  gap: 1px;
  flex: 1;
`;

const TaskSep = styled.span`
  width: 4px;
  height: 16px;
  margin: 12px 8px;
  border: 1px solid #3a4448;
  border-width: 0 1px;
`;

const Tray = styled.div`
  display: flex;
  align-items: center;
  > button { display: flex; align-items: center; justify-content: center; min-width: 26px; }
`;

const Clock = styled.time`
  width: 66px;
  margin-left: 8px;
  font-size: 12px;
  line-height: 19px;
  text-align: center;
`;

const Notice = styled.button`
  width: 50px;
`;

const ShowDesk = styled.span`
  width: 6px;
  height: 40px;
  border-left: 1px solid #4a4a4a;
`;

const G = ({ children, s = 24 }: { children: ReactNode; s?: number }) => (
  <svg width={s} height={s} viewBox="0 0 24 24" fill="none" aria-hidden="true">
    {children}
  </svg>
);

const eShape = 'M20 14H8c1 5 7 6 11 3v3c-7 4-15 1-15-8 0-10 16-11 16 0zM8 11h8c-1-4-7-4-8 0z';
const gg = 'M19 5c-6-4-14-1-14 6 0 7 7 10 12 7 5-4 3-10-2-11-4 0-6 3-5 6 2 3 6 1 5-2';

const appItems: [string, boolean, boolean, ReactNode][] = [
  ['任务视图', false, false, <path d="M7 6h10v12H7zM5 8H3v8h2M19 8h2v8h-2" stroke="#fff" strokeWidth="1.300" />],
  ['四叶草', false, false, (
    <>
      <path d="M11 2c-6-2-9 2-8 5 2 4 6 3 8 4zM13 2c6-1 9 3 8 6l-8 3zM2 14c-1 6 3 9 6 8 4-2 3-5 3-9-4-2-8-2-9 1zM22 13c1 6-2 10-5 9-4-1-5-5-4-9 3-2 8-3 9 0z" fill="#e8e8e8" />
      <path d="M4 12c5-3 11 3 16 0M12 4c-3 5 3 11 0 16" stroke="#000b0f" />
    </>
  )],
  ['浏览器', false, false, (
    <>
      <path d={eShape} fill="#f0f0f0" />
      <path d="M2 20C6 8 16 1 21 3M2 21c3 2 8-1 8-1" stroke="#f0f0f0" strokeWidth="1.600" />
    </>
  )],
  ['G 浏览器', false, false, (
    <>
      <path d="M21 8a10 10 0 1 1-4-5" stroke="#b8b8b8" />
      <path d={gg} stroke="#d0d0d0" strokeWidth="1.400" />
    </>
  )],
];

const runItems: [string, boolean, boolean, ReactNode][] = [
  ['Edge', false, false, <path d="M2 11C4 0 22-1 22 12v2H8c0 6 8 6 13 3v4C12 25 3 21 4 13c1-3 3-5 6-5-2 1-2 3-2 3h8c0-7-10-6-14 0z" fill="#0078d7" />],
  ['Internet Explorer', false, false, (
    <>
      <path d={eShape} fill="#3fb0f0" />
      <path d="M2 21C2 13 14 0 22 3c1 1 0 4-1 5M2 21c2 2 7 0 8-1" stroke="#f0c020" strokeWidth="2" />
    </>
  )],
  ['资源管理器', true, false, (
    <>
      <path d="M1 3h8l1 2h13v16H1z" fill="#f6cf5c" />
      <path d="M1 8h22v13H1z" fill="#fde28c" />
      <path d="M5 13h14v9h-4v-5H9v5H5z" fill="#3f9fe0" />
    </>
  )],
  ['G', true, false, <path d="M19 1c-2 3-6 1-10 3C2 8 1 15 5 20c5 5 14 4 17-2 2-4 1-7-1-8-3 0-6 0-8 2 2 0 4 1 3 4-2 3-7 2-8-1-1-5 3-8 7-8 3 0 5-3 4-6z" fill="#1f96e4" />],
  ['E', true, false, (
    <>
      <circle cx="12" cy="12" r="10" fill="#58b840" />
      <path d={eShape} fill="#fff" />
      <path d="M3 19C6 9 16 3 22 5" stroke="#d8f0a0" strokeWidth="1.400" />
    </>
  )],
  ['广联达', true, true, (
    <>
      <rect width="24" height="24" rx="4" fill="#1a90f0" />
      <path d="M4 12h16M12 5v9c0 4-6 5-7 1M11 5h5M17 12v2c0 4-3 4-5 2" stroke="#fff" strokeWidth="2" />
    </>
  )],
  ['便笺', true, false, (
    <>
      <rect width="24" height="24" rx="2" fill="#f09a1c" />
      <path d="M4 4h14v16H4z" fill="#fff4d8" />
      <path d="M6 8h9M6 11h7M6 14h5" stroke="#c07a20" />
      <path d="M10 17L19 5l2 2-9 12z" fill="#fff" stroke="#905010" />
    </>
  )],
];

const TaskButtons = ({ list }: { list: [string, boolean, boolean, ReactNode][] }) => (
  <>
    {list.map(([t, run, active, pic]) => (
      <Task key={t} aria-label={t} $run={run} $active={active}>
        <G>{pic}</G>
      </Task>
    ))}
  </>
);

const menus = ['文件(F)', '编辑(E)', '楼层(L)', '构件(N)', '绘图(D)', '修改(M)', '钢筋量(Q)', '视图(V)', '工具(T)', '云应用(Y)', 'BIM应用(I)', '在线服务(S)', '帮助(H)', '版本号(B)'];

export default function App() {
  return (
    <Window>
      <Global />
      <TitleBar>
        <Icon n="app" />
        <TitleText>广联达BIM钢筋算量软件 GGJ2013 - [C:\Users\Administrator.PC-20141127NRHM\Desktop\白龙村-2018-02-02-19-24-35</TitleText>
        <WinButtons>
          <button aria-label="最小化"><Icon n="minimize" /></button>
          <button aria-label="还原"><Icon n="restore" /></button>
          <button aria-label="关闭窗口"><Icon n="close" s={14} /></button>
        </WinButtons>
      </TitleBar>

      <BarRow $h={29}>
        <MenuNav>
          {menus.map((m) => (
            <button key={m}>{m}</button>
          ))}
          <MenuTool><Icon n="change" />新建变更<CaretBox><Caret /></CaretBox></MenuTool>
          <MenuTool><Icon n="robot" />广小二</MenuTool>
        </MenuNav>
        <Bar $w={185}>
          <HelpLink href="#help">如何快速布置自定义范..</HelpLink>
        </Bar>
        <Bar $grow>
          <Tools items={[{ i: 'user', t: '13907298339', a: true }, { t: '造价豆:0' }, { i: 'bell' }]} />
          <More />
        </Bar>
      </BarRow>

      <BarRow $h={30}>
        <Bar $w={149}>
          <Tools items={[{ i: 'newFile' }, { i: 'open', a: true }, { i: 'save' }, '|', { i: 'undo', a: true }]} />
          <More />
        </Bar>
        <Bar $w={547}>
          <Tools
            items={[
              { i: 'define', t: '定义' }, { i: 'sigma', t: '汇总计算' }, { i: 'cloud', t: '云检查' }, { i: 'slabTop', t: '平齐板顶', off: true },
              { i: 'find', t: '查找图元' }, { i: 'glasses', t: '查看钢筋量' }, { i: 'batch', t: '批量选择', off: true },
            ]}
          />
          <More />
        </Bar>
        <Bar $grow>
          <Tools
            items={[
              { i: 'cube', t: '三维', a: true }, { i: 'topView', t: '俯视', a: true }, { i: 'orbit', t: '动态观察', on: true },
              { i: 'local3d', t: '局部三维', off: true }, '|', { i: 'full', t: '全屏' }, { i: 'zoom', t: '缩放', a: true },
              { i: 'pan', t: '平移', a: true }, { i: 'rotateScr', t: '屏幕旋转', a: 'tight' }, '|', { i: 'floors', t: '选择楼层' },
            ]}
          />
          <More />
        </Bar>
      </BarRow>

      <Body>
        <Sidebar>
          <SideHead>
            <span>模块导航栏</span>
            <button aria-label="固定"><Icon n="pin" s={12} /></button>
            <button aria-label="关闭"><Icon n="close" s={10} /></button>
          </SideHead>
          <SideButton>工程设置</SideButton>
          <SideButton>绘图输入</SideButton>
          <SidePalette>
            <button aria-label="全部展开"><Icon n="expandAll" /></button>
            <button aria-label="全部折叠"><Icon n="collapseAll" /></button>
          </SidePalette>
          <SideTree />
          <SideButton>单构件输入</SideButton>
          <SideButton>报表预览</SideButton>
        </Sidebar>

        <Main>
          <BarRow $h={28}>
            <Bar>
              <Tools
                items={[
                  ':', { i: 'brush', t: '删除' }, '|', { i: 'copy', t: '复制' }, { i: 'mirror', t: '镜像' }, '|', { i: 'move', t: '移动' },
                  { i: 'rotate', t: '旋转' }, '|', { i: 'extend', t: '延伸', off: true }, { i: 'trim', t: '修剪', off: true }, '|',
                  { i: 'breakIt', t: '打断', off: true }, { i: 'merge', t: '合并' }, { i: 'split', t: '分割' }, '|',
                  { i: 'align', t: '对齐', a: 'tight', off: true }, { i: 'offset', t: '偏移' }, { i: 'stretch', t: '拉伸' }, '|',
                  { i: 'grip', t: '设置夹点' },
                ]}
              />
            </Bar>
          </BarRow>
          <BarRow $h={28}>
            <Bar>
              <Grip />
              <Combo w={57} label="楼层" v="基础层" />
              <Combo w={69} label="构件大类" v="基础" />
              <Combo w={69} label="构件类型" v="筏板基础" />
              <Combo w={69} label="构件" v="FB-3" />
              <Tools
                items={['|', { i: 'props', t: '属性' }, { i: 'editBar', t: '编辑钢筋', on: true }, { i: 'compList', t: '构件列表' }, { i: 'picker', t: '拾取构件' }]}
              />
            </Bar>
            <Bar>
              <Tools
                items={[
                  ':', { i: 'twoPt', t: '两点' }, { i: 'parallel', t: '平行' }, { i: 'ptAngle', t: '点角', a: true },
                  { i: 'threePt', t: '三点辅轴', a: true }, { i: 'brush', t: '删除辅轴' }, { i: 'dim', t: '尺寸标注', a: true },
                ]}
              />
            </Bar>
          </BarRow>
          <BarRow $h={29}>
            <Bar>
              <Tools
                items={[':', { i: 'cursor', t: '选择', a: true }, '|', { i: 'point', t: '点' }, '|', { i: 'line', t: '直线' }, { i: 'circle', t: '圆', a: true }]}
              />
              <Combo w={54} label="画法" v="" />
              <Tools
                items={[
                  { i: 'rect', t: '矩形' }, '|', { i: 'autoSlab', t: '自动生成板' }, { i: 'byBeam', t: '按梁分割' }, { i: 'varSect', t: '设置筏板变截面' },
                  { i: 'viewBar', t: '查看板内钢筋' }, { i: 'slope', t: '设置多边边坡', a: true }, { i: 'cancelSlope', t: '取消所有边坡', a: true },
                  { i: 'slant', t: '三点定义斜筏板', a: true }, { i: 'elev', t: '查改标高' },
                ]}
              />
            </Bar>
            <Bar $w={30}>
              <Grip />
            </Bar>
          </BarRow>

          <Scene />

          <BarRow $h={30}>
            <Bar>
              <Tools items={[':', { i: 'ortho', t: '正交' }, { i: 'snap', t: '对象捕捉', on: true }, { i: 'dynInput', t: '动态输入' }]} />
            </Bar>
            <Bar>
              <Tools
                items={[
                  ':', { i: 'cross', t: '交点' }, { i: 'perp', t: '垂点', on: true }, { i: 'mid', t: '中点', on: true },
                  { i: 'vertex', t: '顶点' }, { i: 'coord', t: '坐标' },
                ]}
              />
            </Bar>
            <Bar>
              <Grip />
              <Combo w={56} label="偏移方式" v="不偏移" />
              <Sep />
              <FieldLabel $dim htmlFor="dx">X=</FieldLabel>
              <Spin id="dx" w={58} v="0" />
              <FieldLabel $dim as="span">mm</FieldLabel>
              <FieldLabel $dim htmlFor="dy">Y=</FieldLabel>
              <Spin id="dy" w={58} v="0" />
              <FieldLabel $dim as="span">mm</FieldLabel>
              <Sep />
              <Check type="checkbox" id="rot" />
              <FieldLabel htmlFor="rot">旋转</FieldLabel>
              <Spin id="angle" w={68} v="0.000" />
              <FieldLabel $dim htmlFor="angle">°</FieldLabel>
            </Bar>
          </BarRow>

          <Dock>
            <DockStrip>
              <Icon n="grayClose" s={10} />
            </DockStrip>
            <DockMain>
              <BarRow $h={25}>
                <Bar $grow>
                  <Tools
                    items={[
                      { i: 'first', off: true }, { i: 'prev', off: true }, { i: 'next', off: true }, { i: 'last', off: true }, '|',
                      { i: 'up', off: true }, { i: 'down', off: true }, '|', { i: 'insert', t: '插入', off: true }, { i: 'remove', t: '删除', off: true },
                      { i: 'scale', t: '缩尺配筋', off: true }, { i: 'barInfo', t: '钢筋信息', off: true }, { i: 'barLib', t: '钢筋图库', off: true },
                      { i: 'other', t: '其他', a: 'tight' }, { t: '关闭' }, '|', { t: '单构件钢筋总重(kg) : 0' },
                    ]}
                  />
                </Bar>
              </BarRow>
              <Grid>
                <GridScroll>
                  <Table>
                    <colgroup>
                      {columns.map(([t, w]) => (
                        <col key={t} style={{ width: w }} />
                      ))}
                    </colgroup>
                    <thead>
                      <tr>
                        {columns.map(([t], k) => {
                          const Head = k === 2 ? HotHead : 'th';
                          return (
                            <Head key={t} scope="col">
                              <Fixed>{t}</Fixed>
                            </Head>
                          );
                        })}
                      </tr>
                    </thead>
                    <tbody>
                      <tr>
                        <RowHead scope="row"><Fixed>1*</Fixed></RowHead>
                        {columns.slice(1).map(([t], k) => (k === 1 ? <EditCell key={t} /> : <td key={t} />))}
                      </tr>
                    </tbody>
                  </Table>
                </GridScroll>
                <HScroll>
                  <Icon n="chevLeft" s={11} />
                  <HTrack>
                    <HThumb />
                  </HTrack>
                  <Icon n="chevRight" s={11} />
                </HScroll>
              </Grid>
            </DockMain>
          </Dock>
        </Main>
      </Body>

      <Status>
        <StatusCell $w={148}><Fixed>X=451664 Y=24181</Fixed></StatusCell>
        <StatusCell $w={78}><Fixed>层高:2.15m</Fixed></StatusCell>
        <StatusCell $w={98}><Fixed>底标高:-2.2m</Fixed></StatusCell>
        <StatusCell $w={48}><Fixed>0</Fixed></StatusCell>
        <StatusCell />
        <StatusCell $w={70}><Fixed>261.8 FPS</Fixed></StatusCell>
      </Status>

      <TaskBar>
        <Start aria-label="开始">
          <G s={16}>
            <path d="M0 3l10-1v9H0zM11 2l13-2v11H11zM0 13h10v9L0 21zM11 13h13v11l-13-2z" fill="#fff" />
          </G>
        </Start>
        <Search>
          <G>
            <circle cx="12" cy="12" r="9.500" stroke="#fff" strokeWidth="2.500" />
          </G>
          <input type="text" aria-label="搜索" placeholder="在这里输入你要搜索的内容" />
          <Icon n="micLine" />
        </Search>
        <TaskList>
          <TaskButtons list={appItems} />
          <TaskSep />
          <TaskButtons list={runItems} />
        </TaskList>
        <Tray>
          <TaskSep />
          <button>链接</button>
          <button aria-label="显示隐藏的图标"><Icon n="chevUp" s={14} /></button>
          <button aria-label="电源">
            <G s={18}>
              <path d="M2 4v5h5V4M4 9v4M8 9h14v9H8z" stroke="#fff" strokeWidth="1.800" />
              <path d="M10 11h9v5h-9z" fill="#fff" />
            </G>
          </button>
          <button aria-label="网络">
            <G s={18}>
              <path d="M3 20C3 10 10 4 21 4M8 20c0-7 5-11 13-11M13 20c0-4 3-6 8-6" stroke="#fff" strokeWidth="1.800" />
              <circle cx="18" cy="19" r="2" fill="#fff" />
            </G>
          </button>
          <button aria-label="音量">
            <G s={18}>
              <path d="M2 9h4l5-5v16l-5-5H2zM14 9c2 2 2 4 0 6M17 6c4 4 4 8 0 12M20 4c4 5 4 11 0 16" stroke="#fff" strokeWidth="1.500" />
            </G>
          </button>
          <button aria-label="触摸键盘"><Icon n="keyboard" s={22} /></button>
          <button>中</button>
          <button aria-label="搜狗输入法">
            <G s={18}>
              <path d="M2 4l18-3 2 18-18 4z" fill="#f04a1c" />
              <path d="M17 6c-4-1-10 0-9 3s9 2 9 5-6 4-10 2" stroke="#fff" strokeWidth="3" />
            </G>
          </button>
          <Clock>
            9:22
            <br />
            2018/5/3
          </Clock>
          <Notice aria-label="通知">
            <G s={20}>
              <path d="M3 4h18v14h-5l-4 4v-4H3z" stroke="#fff" strokeWidth="1.400" />
            </G>
          </Notice>
          <ShowDesk />
        </Tray>
      </TaskBar>

      <ImeBar>
        <button>中</button>
        <button>°,</button>
        <button aria-label="表情"><Icon n="smile" /></button>
        <button aria-label="语音"><Icon n="mic" /></button>
        <button aria-label="软键盘"><Icon n="keyboard" /></button>
        <button aria-label="登录"><Icon n="person" /></button>
        <button aria-label="皮肤"><Icon n="shirt" s={14} /></button>
        <button aria-label="工具箱"><Icon n="wrench" s={14} /></button>
      </ImeBar>
      <ImeLogo width="28" height="28" viewBox="0 0 28 28" fill="none" aria-hidden="true">
        <path d="M2 5c0-2 1-3 3-3l16-2c2 0 3 1 3 3l3 17c0 2-1 3-3 3L8 27c-2 0-3-1-3-3z" fill="#f2541f" />
        <path d="M20 7c-4-2-12 0-12 3 0 4 12 3 12 7 0 3-6 4-11 3" stroke="#fff" strokeWidth="3.500" />
      </ImeLogo>
      <Score>68</Score>
    </Window>
  );
}
